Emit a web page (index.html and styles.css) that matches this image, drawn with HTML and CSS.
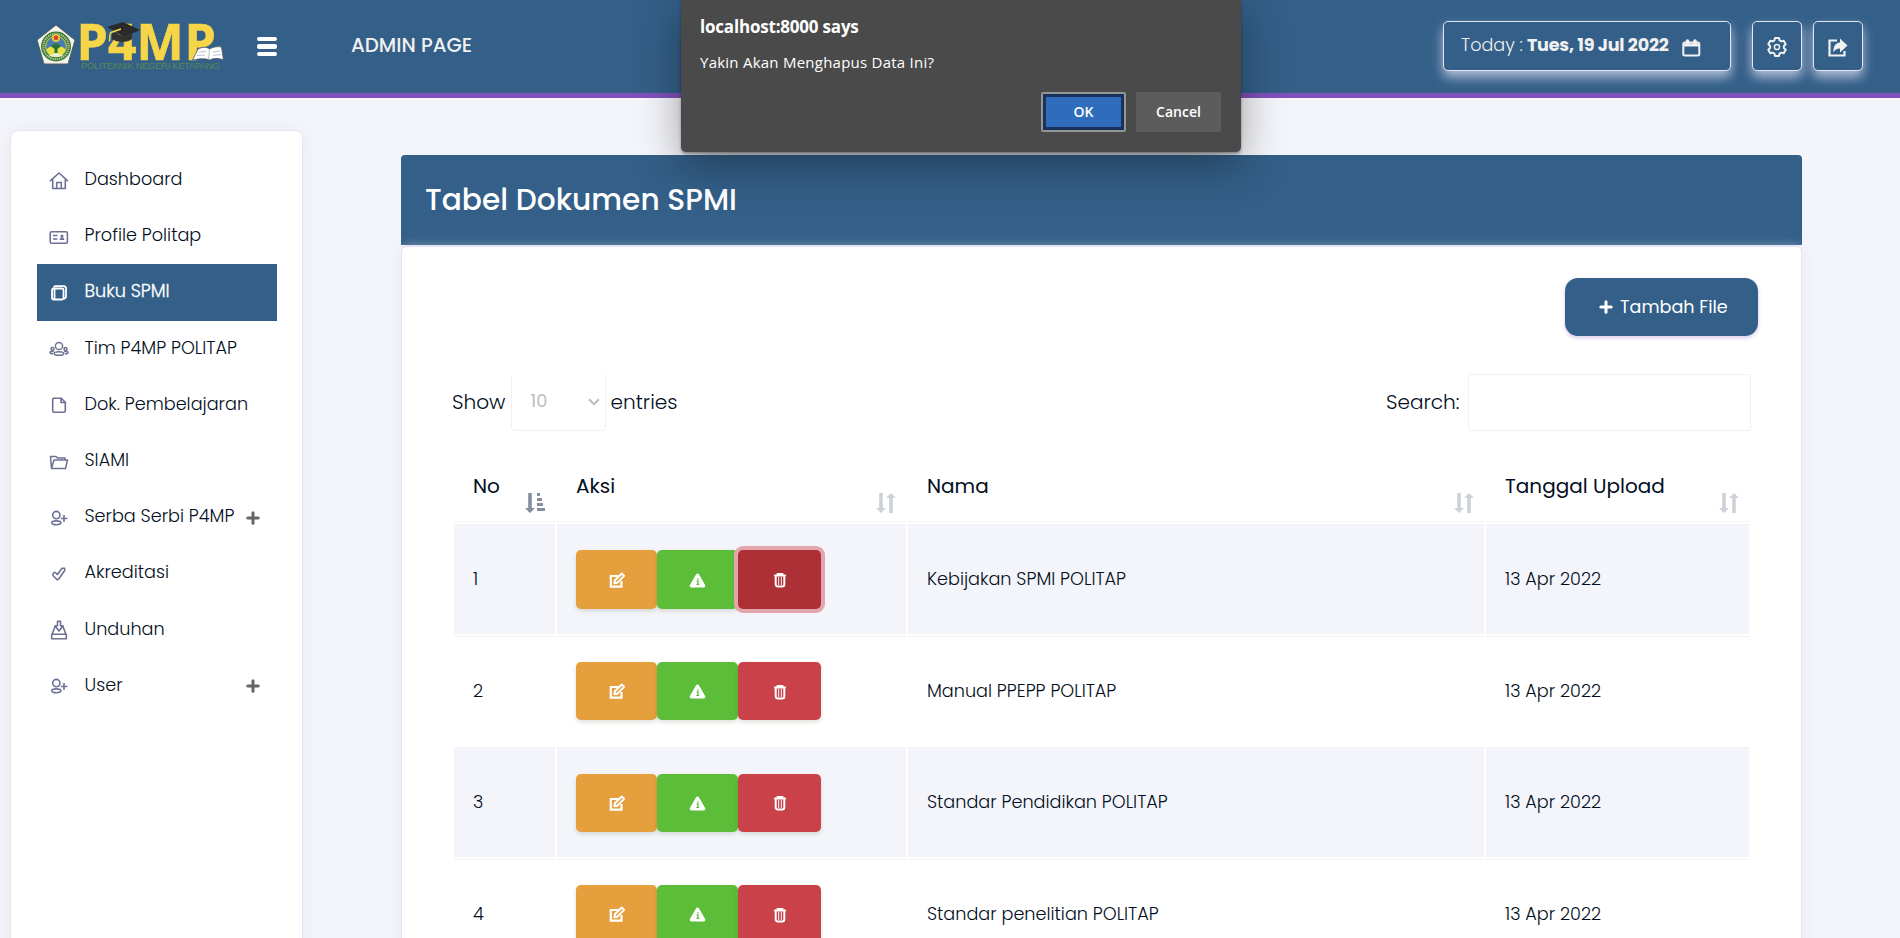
FILE: index.html
```html
<!DOCTYPE html>
<html lang="id">
<head>
<meta charset="utf-8">
<title>P4MP - Tabel Dokumen SPMI</title>
<link rel="stylesheet" href="styles.css">
</head>
<body>
<svg class="sprite" width="0" height="0">
  <symbol id="plus" viewBox="0 0 14 14"><path d="M7 1.8v10.4M1.8 7h10.4" fill="none" stroke="currentColor" stroke-width="3" stroke-linecap="round"/></symbol>
  <symbol id="user-plus" viewBox="0 0 20 20"><g fill="none" stroke="currentColor" stroke-width="1.6"><circle cx="7.3" cy="7.1" r="3.700"/><ellipse cx="7.300" cy="14.800" rx="4.600" ry="1.900"/><path d="M15 7v7M11.800 10.500h6.600"/></g></symbol>
  <symbol id="edit" viewBox="0 0 17 17"><path d="M9 4H1.800v10.700h10.700V9" fill="none" stroke="currentColor" stroke-width="2.200"/><path d="M5.300 11.300l.6-3 6.800-6.800 2.400 2.400-6.800 6.800z" fill="none" stroke="currentColor" stroke-width="2" stroke-linejoin="round"/></symbol>
  <symbol id="alert" viewBox="0 0 18 16"><path d="M9 2.300L15.600 13.600H2.400z" fill="currentColor" stroke="currentColor" stroke-width="3.400" stroke-linejoin="round"/><path d="M8 8.300H9.500V12M7.800 12.200h3M9.400 5.400v1.600" fill="none" stroke="#5bbd38" stroke-width="1.300"/></symbol>
  <symbol id="trash" viewBox="0 0 14 16"><path d="M2 3.500h10M4.500 2h5" stroke="currentColor" stroke-width="2.200" stroke-linecap="round"/><path d="M2.700 4v8.400a2 2 0 0 0 2 2h4.600a2 2 0 0 0 2-2V4" fill="none" stroke="currentColor" stroke-width="2"/><path d="M5.600 5v8M8.400 5v8" stroke="currentColor" stroke-width="1.200" opacity=".8"/></symbol>
  <symbol id="sort" viewBox="0 0 20 20"><path d="M3.200 0h3.600v15H10L5 20 0 15h3.200zM13.200 20h3.600V5H20L15 0l-5 5h3.200z" fill="currentColor"/></symbol>
  <symbol id="sort-asc" viewBox="0 0 20 20"><path d="M3.200 0h3.600v15H10L5 20 0 15h3.200zM12 0h3v3h-3zM12 5h5v3h-5zM12 10h6v3h-6zM12 15h8v3h-8z" fill="currentColor"/></symbol>
</svg>

<header class="topbar">
  <svg class="logo" width="190" height="50" viewBox="0 0 190 50">
    <path d="M19 2L38 17 31 41H7L0 17z" fill="#f3f4ee" stroke="#5a5a55" stroke-width="1"/>
    <circle cx="19" cy="23.500" r="15" fill="#3f7d3b"/>
    <circle cx="19" cy="23.500" r="12.600" fill="none" stroke="#b9cf9a" stroke-width="2" stroke-dasharray="1.200 1"/>
    <circle cx="19" cy="23.500" r="10.300" fill="#477cb0" stroke="#e0cf4c" stroke-width="1"/>
    <path d="M9.500 27c3-5 6-3 9.500-1 3.500-2 6.500-4 9.500 1a10 10 0 0 1-19 0z" fill="#e9e04a"/>
    <circle cx="19" cy="15" r="4" fill="#e8c93c"/><path d="M16.500 14l2.500-2 2.500 2-1 3h-3z" fill="#d8452c"/>
    <path d="M15 24a4 3.500 0 0 1 8 0l-2.500 2v4h-3v-4z" fill="#27752d"/><path d="M11 33l8-3 8 3-8 1z" fill="#e8f0da"/>
    <text class="logo-name" x="39.500 71 99.500 147.500" y="37">P4MP</text>
    <path d="M70 4l16-5 17 8-16 7z" fill="#2a2a2b"/>
    <path d="M75 8.500v7.500c5 4 16 4 20 0V9.500l-8 4z" fill="#333231"/>
    <path d="M84 6l-10 3.500c-2 2-1 6-1.500 9" fill="none" stroke="#f0dc4c" stroke-width="1.500"/>
    <path d="M161 26c5-2.500 9-2 11.500 0 3-2 8-3 12-2l2 13c-6-2.500-11-1.500-14 0-5-2-11-1-17 0z" fill="#fff" stroke="#44566a" stroke-width=".8"/>
    <path d="M172.500 26l-1 10.500M162 29l7-.5M160 32.500l8-.5M176 29l7-1M176 32.500l8-1" stroke="#9aa8b8" stroke-width=".7"/>
    <text class="logo-sub" x="44" y="46" textLength="139">POLITEKNIK NEGERI KETAPANG</text>
  </svg>
  <div class="burger"><i></i><i></i><i></i></div>
  <h1 class="page-name"><span class="t">ADMIN PAGE</span></h1>
  <div class="tools">
    <div class="today"><span class="t">Today :</span><b class="t today-date">Tues, 19 Jul 2022</b>
      <svg width="19" height="18" viewBox="0 0 19 18"><g fill="none" stroke="currentColor" stroke-width="2"><rect x="1.300" y="3.500" width="16" height="13" rx="1.500"/><path d="M1.500 6h16" stroke-width="3"/><path d="M5.500 2v3M13 2v3" stroke-width="3.600" stroke-linecap="round"/></g></svg>
    </div>
    <a class="tool tool-gear"><svg width="20" height="20" viewBox="0 0 20 20"><path d="M8 1h4l.6 2.400 1.700 1 2.400-.7 2 3.500-1.800 1.700v2.200l1.800 1.700-2 3.500-2.400-.7-1.700 1L12 19H8l-.6-2.400-1.700-1-2.400.7-2-3.500 1.800-1.700V8.900L1.300 7.200l2-3.500 2.400.7 1.700-1z" fill="none" stroke="currentColor" stroke-width="2" stroke-linejoin="round"/><circle cx="10" cy="10" r="2.600" fill="none" stroke="currentColor" stroke-width="1.500"/></svg></a>
    <a class="tool"><svg width="20" height="19" viewBox="0 0 20 19"><path d="M9 2.500H1.500V17.500H16.500V13" fill="none" stroke="currentColor" stroke-width="2.200"/><path d="M12 .500L19.500 7.500 12 14.500V10.500C8.500 10.500 7 12 5.500 14.500 5 8.500 7.500 5 12 4.500z" fill="currentColor"/></svg></a>
  </div>
</header>

<div class="layout">
  <nav class="sidebar">
    <a class="item"><svg viewBox="0 0 20 20"><path d="M1.500 9.600L10 2l8.500 7.600M3.700 8.500V17.500H16.300V8.500M7.700 17.500V11.500h4.600v6" fill="none" stroke="currentColor" stroke-width="1.600" stroke-linejoin="round" stroke-linecap="round"/></svg><span class="t">Dashboard</span></a>
    <a class="item"><svg viewBox="0 0 20 20"><rect x="1.200" y="4.700" width="17.200" height="11.600" rx="1.500" fill="none" stroke="currentColor" stroke-width="1.600"/><path d="M4 8.600h4.500M4 12h4.500" stroke="currentColor" stroke-width="1.500"/><circle cx="13" cy="9" r="1.500" fill="currentColor"/><path d="M10.500 13l1-2.500h3l1 2.500z" fill="currentColor"/></svg><span class="t">Profile Politap</span></a>
    <a class="item active"><svg viewBox="0 0 20 20"><rect x="3" y="5.500" width="11.500" height="11" rx="1.500" fill="none" stroke="currentColor" stroke-width="1.800"/><path d="M5.500 5.500V16M4.500 4.200l1.500-1h9.500l1.500 1.300v9.500l-2 2" fill="none" stroke="currentColor" stroke-width="1.800" stroke-linejoin="round"/></svg><span class="t">Buku SPMI</span></a>
    <a class="item"><svg viewBox="0 0 20 20"><g fill="none" stroke="currentColor" stroke-width="1.500"><circle cx="10" cy="7" r="3.600"/><circle cx="3.500" cy="10" r="1.500"/><circle cx="16.500" cy="10" r="1.500"/><ellipse cx="10" cy="14.500" rx="4.800" ry="1.800"/><path d="M4.800 12.500H3c-1 0-2 .6-2 1.300s.8 1 3 1M15.200 12.500H17c1 0 2 .6 2 1.300s-.8 1-3 1"/></g></svg><span class="t">Tim P4MP POLITAP</span></a>
    <a class="item"><svg viewBox="0 0 20 20"><path d="M5.500 3.200h6.800l4 4v8.600a1.500 1.500 0 0 1-1.500 1.500H5.200a1.500 1.500 0 0 1-1.500-1.500V4.700a1.500 1.500 0 0 1 1.800-1.500zM12 3.500v4h4" fill="none" stroke="currentColor" stroke-width="1.600" stroke-linejoin="round"/></svg><span class="t">Dok. Pembelajaran</span></a>
    <a class="item"><svg viewBox="0 0 20 20"><path d="M2.500 16.500L1.500 4.500h5.500l1.500 1.500h7.500v2M2.500 16.500L5 8h13.500l-2 8.500z" fill="none" stroke="currentColor" stroke-width="1.500" stroke-linejoin="round"/></svg><span class="t">SIAMI</span></a>
    <a class="item"><svg><use href="#user-plus"/></svg><span class="t">Serba Serbi P4MP</span><svg class="more"><use href="#plus"/></svg></a>
    <a class="item"><svg viewBox="0 0 20 20"><path d="M4 9.800l1.500-1.500c1.300 0 2 1.500 3 2.200L13 4.300h2.700v2.200L9.500 15.300l-1.500.4L4 11.500z" fill="none" stroke="currentColor" stroke-width="1.600" stroke-linejoin="round"/></svg><span class="t">Akreditasi</span></a>
    <a class="item"><svg viewBox="0 0 20 20"><path d="M2.700 14.300h14.600v4.400H2.700zM3.200 14L6 6.500h1.500M16.800 14L14 6.500h-1.500M8.500 1.300h3v4.500H14L10 11 6 5.800h2.500z" fill="none" stroke="currentColor" stroke-width="1.600" stroke-linejoin="round"/></svg><span class="t">Unduhan</span></a>
    <a class="item"><svg><use href="#user-plus"/></svg><span class="t">User</span><svg class="more"><use href="#plus"/></svg></a>
  </nav>

  <main class="main">
    <h2 class="panel-title"><span class="t">Tabel Dokumen SPMI</span></h2>
    <section class="panel">
      <div class="actions"><a class="add"><svg width="14" height="14"><use href="#plus"/></svg><span class="t">Tambah File</span></a></div>
      <div class="filters">
        <span class="t">Show</span>
        <div class="select"><span class="t">10</span><svg width="12" height="8" viewBox="0 0 12 8"><path d="M1 1.200l5 5 5-5" fill="none" stroke="currentColor" stroke-width="2"/></svg></div>
        <span class="t">entries</span>
        <span class="t search-label">Search:</span><div class="search"></div>
      </div>
      <table class="docs">
        <colgroup><col class="c-no"><col class="c-act"><col class="c-name"><col class="c-date"></colgroup>
        <thead><tr>
          <th><div class="th"><span class="t">No</span><svg class="sorted"><use href="#sort-asc"/></svg></div></th>
          <th><div class="th"><span class="t">Aksi</span><svg><use href="#sort"/></svg></div></th>
          <th><div class="th"><span class="t">Nama</span><svg><use href="#sort"/></svg></div></th>
          <th><div class="th"><span class="t">Tanggal Upload</span><svg><use href="#sort"/></svg></div></th>
        </tr></thead>
        <tbody>
          <tr class="odd first"><td><span class="t">1</span></td><td><div class="btns"><a class="edit"><svg><use href="#edit"/></svg></a><a class="info"><svg><use href="#alert"/></svg></a><a class="del focus"><svg><use href="#trash"/></svg></a></div></td><td><span class="t">Kebijakan SPMI POLITAP</span></td><td><span class="t">13 Apr 2022</span></td></tr>
          <tr class="even"><td><span class="t">2</span></td><td><div class="btns"><a class="edit"><svg><use href="#edit"/></svg></a><a class="info"><svg><use href="#alert"/></svg></a><a class="del"><svg><use href="#trash"/></svg></a></div></td><td><span class="t">Manual PPEPP POLITAP</span></td><td><span class="t">13 Apr 2022</span></td></tr>
          <tr class="odd"><td><span class="t">3</span></td><td><div class="btns"><a class="edit"><svg><use href="#edit"/></svg></a><a class="info"><svg><use href="#alert"/></svg></a><a class="del"><svg><use href="#trash"/></svg></a></div></td><td><span class="t">Standar Pendidikan POLITAP</span></td><td><span class="t">13 Apr 2022</span></td></tr>
          <tr class="even"><td><span class="t">4</span></td><td><div class="btns"><a class="edit"><svg><use href="#edit"/></svg></a><a class="info"><svg><use href="#alert"/></svg></a><a class="del"><svg><use href="#trash"/></svg></a></div></td><td><span class="t">Standar penelitian POLITAP</span></td><td><span class="t">13 Apr 2022</span></td></tr>
        </tbody>
      </table>
    </section>
  </main>
</div>

<div class="dialog">
  <strong>localhost:8000 says</strong>
  <p>Yakin Akan Menghapus Data Ini?</p>
  <div class="dialog-buttons"><button class="ok">OK</button><button>Cancel</button></div>
</div>
</body>
</html>
```

FILE: styles.css
```css
* { box-sizing: border-box; }
body { margin: 0; height: 938px; overflow: hidden; background: #f4f5fa; color: #020e22; font-family: Poppins, Inter, "Open Sans", sans-serif; font-weight: 300; position: relative; }
.t { white-space: nowrap; padding-bottom: 2px; }
.sprite { position: absolute; }
h1, h2, p { margin: 0; }

.topbar { height: 98px; background: #335f88; border-bottom: 5px solid #7f50ba; display: flex; align-items: center; padding: 0 37px 0 37px; color: #f1f1f1; }
.logo { overflow: visible; margin-top: 2px; }
.logo-name { font: 700 50px "Open Sans", sans-serif; fill: #f7d548; stroke: #f7d548; stroke-width: .6px; }
.logo-sub { font: 9.500px "Liberation Sans", sans-serif; fill: #558a55; }
.burger { width: 20px; margin-left: 30px; display: grid; gap: 3px; }
.burger i { height: 4.500px; border-radius: 2px; background: #fff; }
.page-name { margin-left: 74px; margin-top: -4px; font-size: 19.800px; line-height: 24px; font-weight: 500; }
.tools { margin-left: auto; margin-top: -1px; display: flex; color: #f1f1f1; }
.today, .tool { height: 50px; border: 1px solid #e3e6f5; border-radius: 5px; background: #335f88; box-shadow: 0 6px 12px rgba(225,225,245,.75); display: flex; align-items: center; }
.today { width: 288px; padding-left: 17px; font-size: 17.600px; }
.today .t { padding-bottom: 2px; }
.today-date { font-weight: 700; margin-left: 4px; letter-spacing: -.22px; }
.today svg { margin-left: auto; margin-right: 29px; margin-top: 3px; }
.tool { width: 50px; justify-content: center; margin-left: 11px; }
.tool-gear { margin-left: 21px; }
.tool svg { margin-top: 2px; }

.layout { display: flex; align-items: flex-start; }
.sidebar { width: 293px; height: 840px; margin: 32px 0 0 10px; padding: 21px 25px 21px 26px; border: 1px solid #e6e5f6; border-radius: 8px; background: #fff; box-shadow: 0 0 14px rgba(225,225,242,.6); display: flex; flex-direction: column; }
.item { height: 56.200px; flex: none; display: flex; align-items: center; padding: 0 17px 0 12px; font-size: 17.650px; }
.item .t { padding-bottom: 3px; }
.item svg { width: 20px; height: 20px; margin-right: 15.500px; margin-top: 1px; color: #6d7193; }
.item .more { width: 14px; height: 14px; margin: 1px 0 0 auto; color: #666; }
.item.active { background: #335f88; color: #fff; }
.item.active .t { -webkit-text-stroke: .3px #fff; }
.item.active svg { color: #fff; }

.main { width: 1401px; margin: 57px 0 0 98px; }
.panel-title { height: 90px; background: #335f88; border-radius: 4px 4px 0 0; color: #fff; display: flex; align-items: center; padding-left: 24px; font-size: 29.650px; font-weight: 500; }
.panel-title .t { padding-bottom: 1px; }
.panel { height: 720px; border: 1px solid #e6e5f6; border-top-width: 2px; border-radius: 6px; background: #fff; box-shadow: 0 2px 12px rgba(225,225,242,.6); padding: 31px 43px 0 50px; }
.actions { display: flex; justify-content: flex-end; }
.add { width: 193px; height: 58px; border-radius: 13px; background: #335f88; color: #fff; font-size: 17.600px; font-weight: 400; display: flex; align-items: center; padding-left: 34px; gap: 7px; box-shadow: 0 2px 4px rgba(127,80,186,.3); }
.add .t { padding-bottom: 1px; }
.filters { display: flex; align-items: center; height: 58px; margin-top: 37px; font-size: 20.100px; margin-right: 7px; }
.filters > .t { padding-bottom: 1px; }
.select { width: 95px; height: 58px; border: 1px solid #f1f1f3; border-top-color: #fff; border-radius: 4px; margin: 0 5px 0 5px; padding: 0 5px 0 19px; display: flex; align-items: center; justify-content: space-between; color: #bcbcbc; font-size: 17.600px; font-weight: 400; }
.search-label { margin-left: auto; }
.search { width: 283px; height: 57px; margin-left: 8.500px; border: 1px solid #f1f1f3; border-radius: 3px; }

.docs { border-collapse: separate; border-spacing: 2px; table-layout: fixed; width: 1299px; margin-top: 19px; }
.c-no { width: 101px; } .c-act { width: 349px; } .c-name { width: 576px; } .c-date { width: 263px; }
th { height: 70px; padding: 0; border-bottom: 1px solid #f1f1f3; text-align: left; font-weight: 400; font-size: 20px; }
.th { display: flex; justify-content: space-between; padding: 0 10px 0 19px; height: 69px; align-items: center; }
.th .t { padding-bottom: 1px; }
.th svg { width: 20px; height: 20px; color: #cdd1d8; align-self: flex-end; margin-bottom: 8px; }
.th .sorted { color: #838e9f; }
td { height: 110px; padding: 0 19px 2px; font-size: 17.650px; border-top: 1px solid #f2f2f4; }
td:nth-child(2) { padding-bottom: 0; }
.even td { height: 109px; }
.odd td { background: #f4f5fa; }
.btns { display: flex; }
.btns a { height: 58px; border-radius: 5px; display: flex; align-items: center; justify-content: center; color: #fff; box-shadow: 0 2px 4px rgba(90,90,60,.2); }
.first .btns a { height: 59px; }
.btns svg { width: 17px; height: 17px; margin-top: 1px; }
.btns .edit { width: 81px; background: #e59f3c; padding-left: 1px; }
.btns .info { width: 81px; background: #5bbd38; }
.btns .del { width: 83px; background: #ca4249; }
.btns .del svg { width: 16px; height: 16px; }
.btns .focus { background: #ac3035; box-shadow: 0 0 0 4px #e4a6ae; }

.dialog { position: absolute; left: 681px; top: 0; width: 560px; height: 152px; background: #4a4a4a; border-radius: 0 0 5px 5px; box-shadow: 0 2px 3px rgba(0,0,0,.35), 0 12px 44px rgba(0,0,0,.36); color: #fff; padding: 16px 20px 20px 19px; font-family: "Segoe UI", "Open Sans", "Noto Sans", sans-serif; }
.dialog strong { display: block; font-size: 17px; line-height: 22px; font-weight: 700; letter-spacing: -.2px; }
.dialog p { font-size: 15px; line-height: 20px; font-weight: 400; margin-top: 14px; letter-spacing: .24px; }
.dialog-buttons { display: flex; justify-content: flex-end; gap: 10px; margin-top: 20px; }
.dialog button { width: 85px; height: 40px; border: 0; border-radius: 2px; padding: 0 0 2px; background: #5c5c5c; color: #fff; font: 600 14px "Open Sans", sans-serif; }
.dialog .ok { background: #2f6cbb; border: 2px solid #959595; box-shadow: inset 0 0 0 3px #17335c; }
```
